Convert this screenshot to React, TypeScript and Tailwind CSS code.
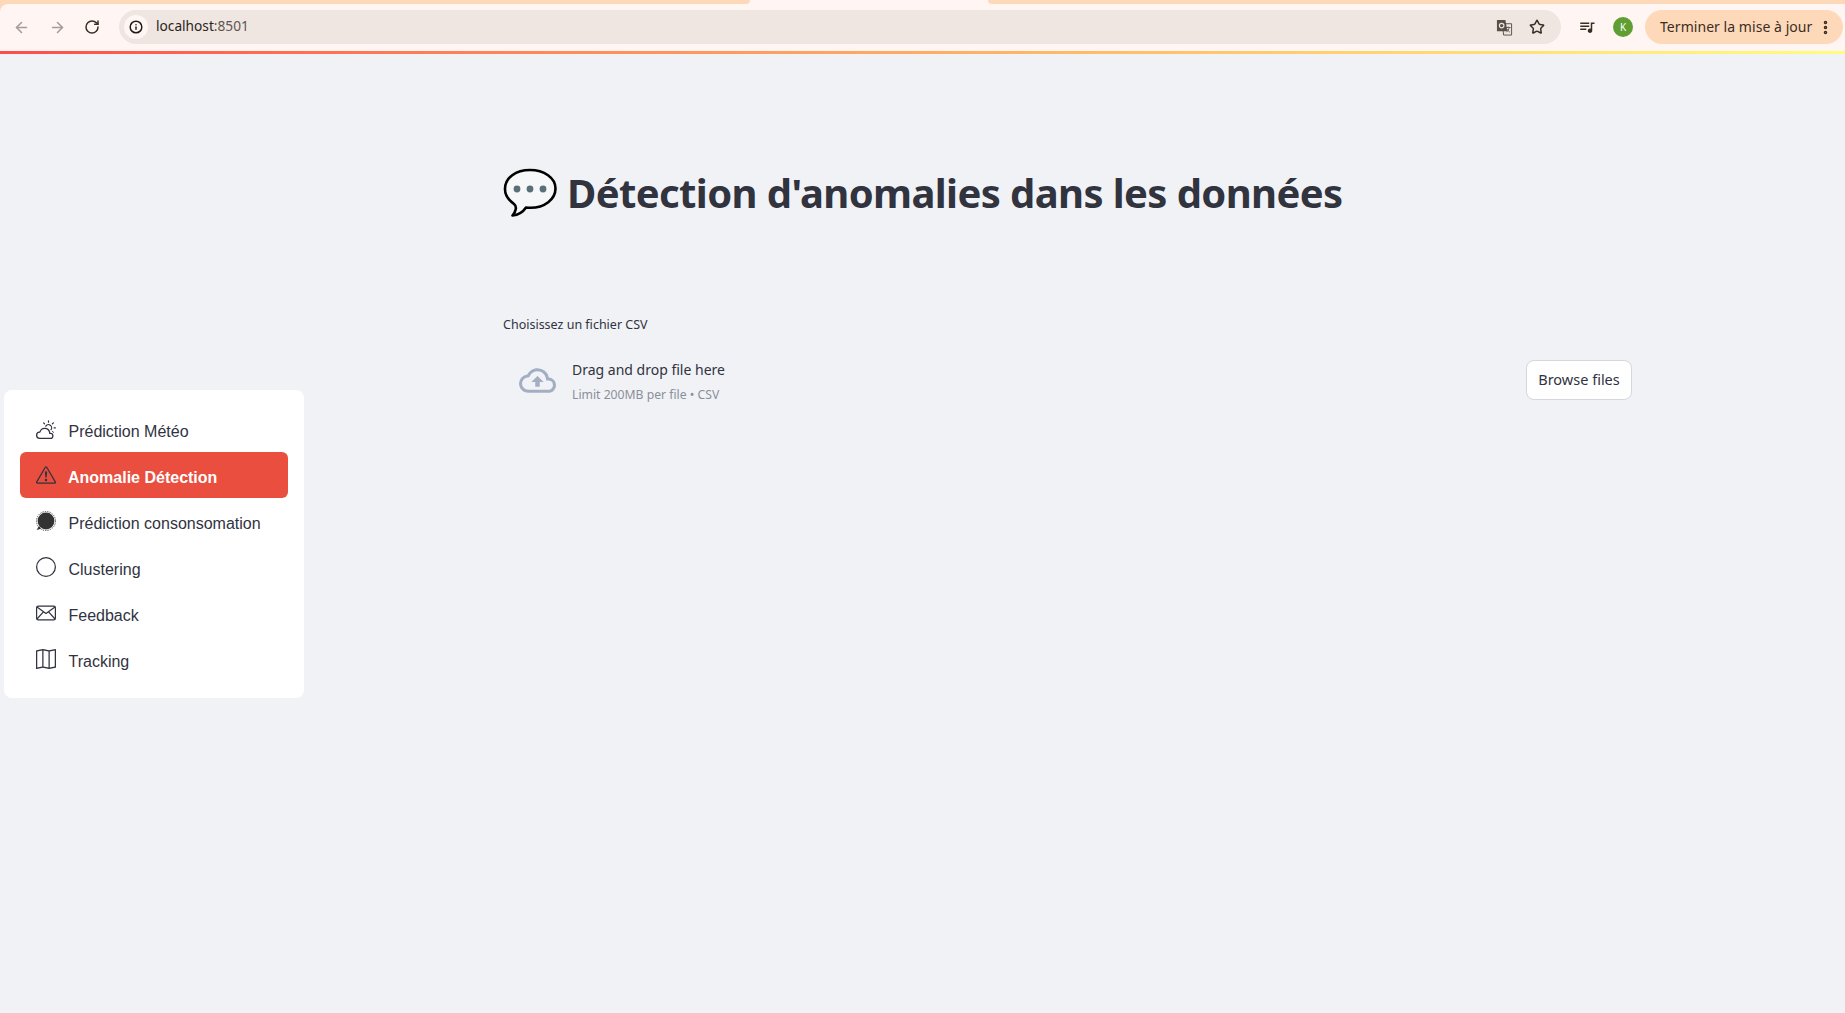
import React from 'react';
import { ArrowLeft, ArrowRight, RotateCw, Info, Star, EllipsisVertical } from 'lucide-react';
import { BsCloudSun, BsExclamationTriangle, BsCircle, BsMap } from 'react-icons/bs';

const navItems = [
  { label: 'Prédiction Météo', icon: 'cloud' },
  { label: 'Anomalie Détection', icon: 'warning', active: true },
  { label: 'Prédiction consonsomation', icon: 'dot' },
  { label: 'Clustering', icon: 'circle' },
  { label: 'Feedback', icon: 'mail' },
  { label: 'Tracking', icon: 'map' },
];

const NavIcon = ({ name }: { name: string }) => {
  const cls = 'w-5 h-5 shrink-0 text-[#31333f]';
  if (name === 'cloud') return <BsCloudSun className={cls} />;
  if (name === 'warning') return <BsExclamationTriangle className={cls} />;
  if (name === 'circle') return <BsCircle className={cls} />;
  if (name === 'map') return <BsMap className={cls} />;
  if (name === 'dot') {
    return (
      <svg viewBox="0 0 20 20" className={cls}>
        <circle cx="10" cy="10" r="8.4" fill="#333" />
        <circle cx="10" cy="10" r="9.5" fill="none" stroke="currentColor" strokeWidth="0.8" strokeDasharray="1.4 1" />
        <path d="M3 15l-2.4 4 4.4-1.2z" fill="#333" />
      </svg>
    );
  }
  return (
    <svg viewBox="0 0 20 20" fill="none" stroke="currentColor" strokeWidth="1.2" className={cls}>
      <rect x="0.6" y="3.2" width="18.8" height="13.6" rx="1.6" />
      <path d="M1 4l9 6.4L19 4M1 16l6.6-7.4M19 16l-6.6-7.4" />
    </svg>
  );
};

const Toolbar = () => (
  <div className="shrink-0 bg-[#fed9b9]">
    <div className="h-[4px] flex bg-[#fff6f3]">
      <div className="w-[750px] rounded-br-[5px] bg-[#fed9b9]" />
      <div className="w-[238px]" />
      <div className="flex-1 rounded-bl-[5px] bg-[#fed9b9]" />
    </div>
    <div className="h-[47px] pb-[1px] flex items-center rounded-tl-lg bg-[#fff6f3] font-['Noto_Sans',sans-serif] text-[#3a2d24]">
      <ArrowLeft className="w-[17px] h-[17px] ml-[13px] text-[#a49d98]" strokeWidth={2.25} />
      <ArrowRight className="w-[17px] h-[17px] ml-[19px] text-[#a49d98]" strokeWidth={2.25} />
      <RotateCw className="w-[16px] h-[16px] ml-[18px]" strokeWidth={2.25} />
      <div className="ml-[19px] w-[1442px] h-[34px] flex items-center rounded-full bg-[#efe6e1]">
        <div className="ml-[5px] w-6 h-6 flex items-center justify-center rounded-full bg-[#fff6f3]">
          <Info className="w-[14px] h-[14px] text-[#1f1a17]" strokeWidth={2.5} />
        </div>
        <span className="ml-[8px] mb-[1px] text-[13.7px] text-[#2a2420]">
          localhost<span className="text-[#5d5550]">:8501</span>
        </span>
        <svg viewBox="0 0 18 18" className="ml-auto w-[17px] h-[17px] text-[#5a4f48]">
          <path d="M7 5h9.5v12H8z" fill="#efe6e1" stroke="currentColor" strokeWidth="1" />
          <path d="M1 1h9l2 12H1z" fill="currentColor" />
          <circle cx="6" cy="7" r="2.4" fill="none" stroke="#efe6e1" strokeWidth="1.2" />
          <path d="M10.5 9h5M13 8v1M14 9c-.4 2-1.4 3.6-3 5M11.5 10.5c.8 1.4 1.8 2.5 3.2 3.5" fill="none" stroke="currentColor" strokeWidth="0.9" />
        </svg>
        <Star className="ml-[16px] mr-[16px] w-[16px] h-[16px] text-[#3a2d24]" strokeWidth={2.25} />
      </div>
      <svg viewBox="0 0 24 24" fill="currentColor" className="ml-[17px] w-[18px] h-[18px]">
        <path d="M22 6h-5v8.18c-.31-.11-.65-.18-1-.18-1.66 0-3 1.34-3 3s1.34 3 3 3 3-1.34 3-3V8h3V6zm-7 0H3v2h12V6zm0 4H3v2h12v-2zm-4 4H3v2h8v-2z" />
      </svg>
      <div className="ml-[17px] w-5 h-5 flex items-center justify-center rounded-full bg-[#5f9e33] text-[10px] text-white">K</div>
      <div className="ml-[12px] w-[198px] h-[34px] flex items-center rounded-full bg-[#fed9b9] pl-[15px] text-[14px] whitespace-nowrap">
        <span className="mb-[2px] tracking-[0.05px]">Terminer la mise à jour</span>
        <EllipsisVertical className="ml-auto mr-[9px] w-[17px] h-[17px]" strokeWidth={3} />
      </div>
    </div>
    <div className="h-[3px] bg-gradient-to-r from-[#ff4b4b] to-[#fffd80]" />
  </div>
);

export default function App() {
  return (
    <div className="h-[1013px] overflow-hidden flex flex-col bg-[#f0f2f6] font-['Noto_Sans',sans-serif] text-[#31333f]">
      <Toolbar />
      <div className="flex flex-1">
        <aside className="w-[300px] ml-[4px] mt-[336px] shrink-0">
          <nav className="h-[308px] rounded-lg bg-white px-4 py-4 font-['Liberation_Sans',sans-serif]">
            {navItems.map((item) => (
              <div
                key={item.label}
                className={
                  item.active
                    ? 'h-[46px] flex items-center gap-[12px] rounded-md bg-[#e94e3e] pl-4 text-[16px] font-bold text-white'
                    : 'h-[46px] flex items-center gap-[12.5px] pl-4 text-[16px] text-[#31333f]'
                }
              >
                <NavIcon name={item.icon} />
                <span className="pt-[5px]">{item.label}</span>
              </div>
            ))}
          </nav>
        </aside>
        <main className="ml-[199px] w-[1129px] shrink-0">
          <h1 className="mt-[109px] flex items-center text-[40px] leading-[60px] font-bold tracking-[-0.6px] whitespace-nowrap">
            <svg viewBox="0 0 54 50" className="w-[54px] h-[50px] shrink-0 mr-[10px]">
              <path d="M27 2C13 2 2 9.5 2 21c0 6.5 4 11.5 9 15 1.5 1.2 2.2 2.5 1.8 5-.3 2-1.3 4-3.3 6.5 5-.5 10.5-3.5 13.5-8 1.5.2 3 .3 4.5.3 14 0 25-8.5 25-19.3S41 2 27 2z" fill="#f5f7f8" stroke="#000" strokeWidth="2.6" strokeLinejoin="round" />
              <circle cx="14" cy="21" r="3.4" fill="#5b6f78" />
              <circle cx="27" cy="21" r="3.4" fill="#5b6f78" />
              <circle cx="40" cy="21" r="3.4" fill="#5b6f78" />
            </svg>
            Détection d'anomalies dans les données
          </h1>
          <p className="mt-[92px] text-[12.5px] leading-5">Choisissez un fichier CSV</p>
          <div className="mt-[13px] h-[64px] flex items-center pl-4">
            <svg viewBox="0 0 24 24" className="w-[37px] h-[37px] shrink-0 text-[#a3aec4]" fill="currentColor">
              <path d="M19.35 10.04A7.49 7.49 0 0 0 12 4C9.11 4 6.6 5.64 5.35 8.04A5.994 5.994 0 0 0 0 14c0 3.31 2.69 6 6 6h13c2.76 0 5-2.24 5-5 0-2.64-2.05-4.78-4.65-4.96zM19 18H6c-2.21 0-4-1.79-4-4 0-2.05 1.53-3.76 3.56-3.97l1.07-.11.5-.95A5.469 5.469 0 0 1 12 6c2.62 0 4.88 1.86 5.39 4.43l.3 1.5 1.53.11A2.98 2.98 0 0 1 22 15c0 1.65-1.35 3-3 3zM8 13h2.55v3h2.9v-3H16l-4-4z" />
            </svg>
            <div className="ml-[16px] pt-[2px]">
              <div className="text-[14px] leading-6">Drag and drop file here</div>
              <div className="text-[12.2px] leading-5 text-[#8b8f99] mt-[3px]">Limit 200MB per file • CSV</div>
            </div>
            <button className="ml-auto w-[106px] h-10 rounded-lg border border-[#d5d7de] bg-white text-[14.5px]">Browse files</button>
          </div>
        </main>
      </div>
    </div>
  );
}
